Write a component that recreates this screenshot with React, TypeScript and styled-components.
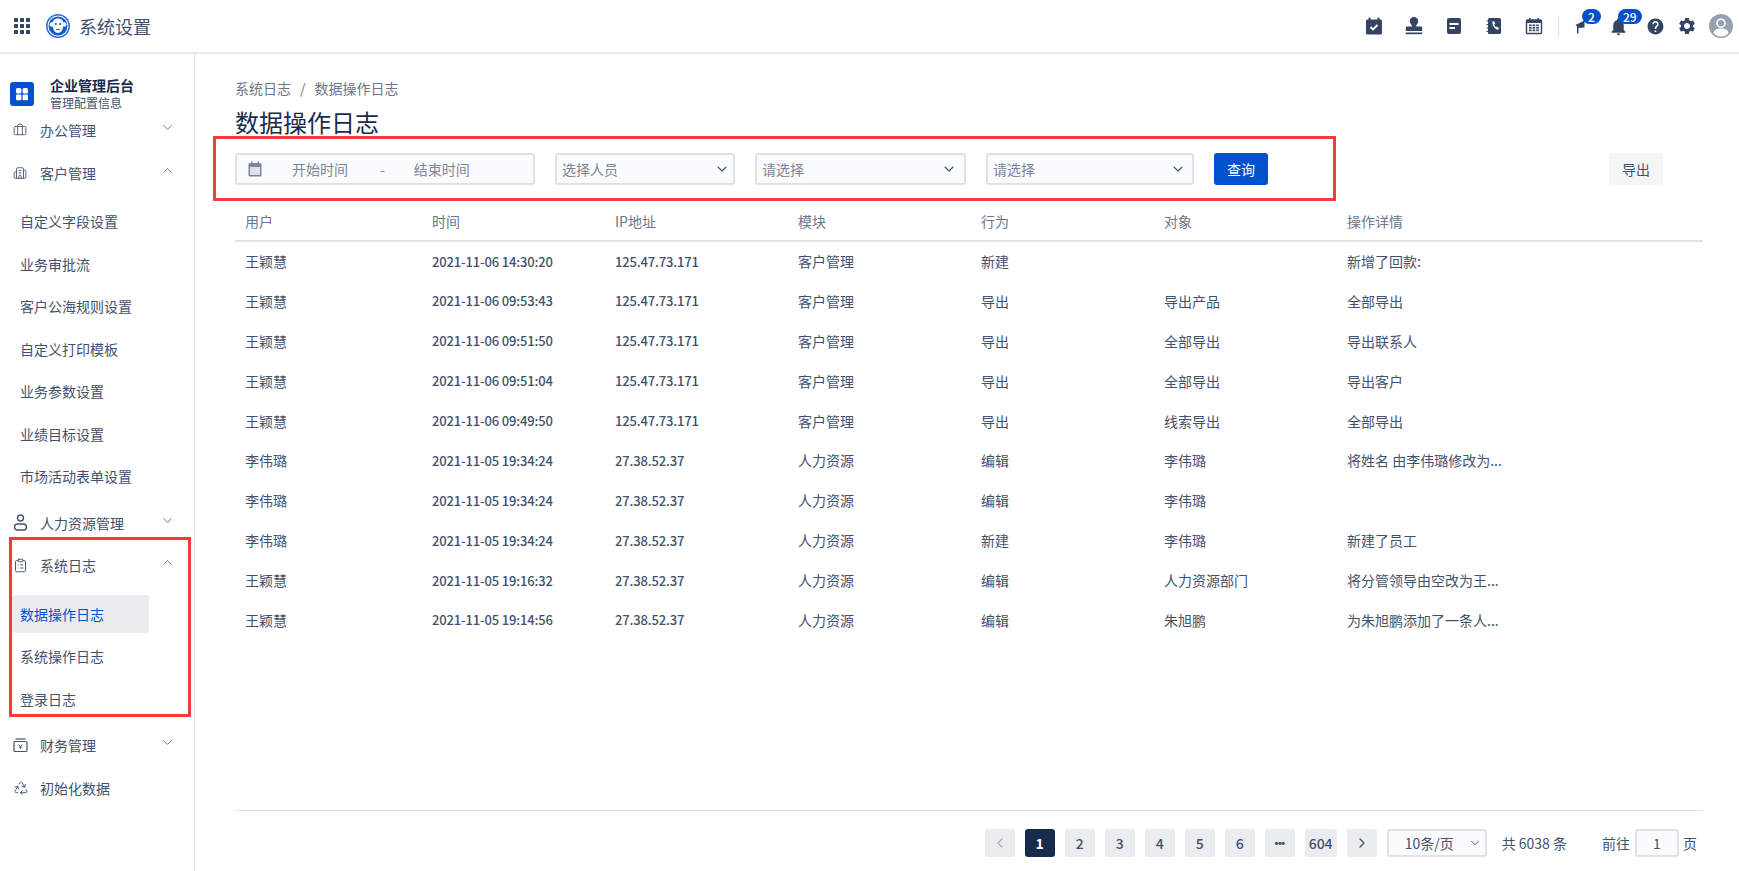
import React from "react";
import styled, { createGlobalStyle } from "styled-components";
import { Briefcase, Building2, ChevronDown, ChevronLeft, ChevronRight, ChevronUp, ClipboardList, Recycle } from "lucide-react";
import { MdHelp, MdNotifications, MdSettings } from "react-icons/md";

const NAVY = "#344563";
const TEXT = "#42526e";

const rows = [
  ["王颖慧", "2021-11-06 14:30:20", "125.47.73.171", "客户管理", "新建", "", "新增了回款:"],
  ["王颖慧", "2021-11-06 09:53:43", "125.47.73.171", "客户管理", "导出", "导出产品", "全部导出"],
  ["王颖慧", "2021-11-06 09:51:50", "125.47.73.171", "客户管理", "导出", "全部导出", "导出联系人"],
  ["王颖慧", "2021-11-06 09:51:04", "125.47.73.171", "客户管理", "导出", "全部导出", "导出客户"],
  ["王颖慧", "2021-11-06 09:49:50", "125.47.73.171", "客户管理", "导出", "线索导出", "全部导出"],
  ["李伟璐", "2021-11-05 19:34:24", "27.38.52.37", "人力资源", "编辑", "李伟璐", "将姓名 由李伟璐修改为..."],
  ["李伟璐", "2021-11-05 19:34:24", "27.38.52.37", "人力资源", "编辑", "李伟璐", ""],
  ["李伟璐", "2021-11-05 19:34:24", "27.38.52.37", "人力资源", "新建", "李伟璐", "新建了员工"],
  ["王颖慧", "2021-11-05 19:16:32", "27.38.52.37", "人力资源", "编辑", "人力资源部门", "将分管领导由空改为王..."],
  ["王颖慧", "2021-11-05 19:14:56", "27.38.52.37", "人力资源", "编辑", "朱旭鹏", "为朱旭鹏添加了一条人..."],
];

const GlobalStyle = createGlobalStyle`
  html, body {
    margin: 0;
    padding: 0;
    background: #fff;
    font-family: "Noto Sans CJK SC", "Noto Sans", sans-serif;
    color: ${TEXT};
  }
  * {
    box-sizing: border-box;
  }
`;

const Page = styled.div`
  display: flex;
  flex-direction: column;
  height: 100vh;
  overflow: hidden;
`;

const Header = styled.header`
  display: flex;
  align-items: center;
  flex: 0 0 54px;
  padding-left: 14px;
  border-bottom: 2px solid #e6e8ec;
`;

const AppName = styled.div`
  margin-left: 9px;
  font-size: 18px;
  line-height: 24px;
  color: ${TEXT};
`;

const Logo = styled.svg`
  width: 24px;
  height: 24px;
  margin-left: 16px;
`;

const HeaderIcons = styled.div`
  display: flex;
  align-items: center;
  margin-left: auto;
  height: 52px;
`;

const IconSlot = styled.div<{ $w: number }>`
  position: relative;
  display: flex;
  align-items: center;
  justify-content: center;
  width: ${p => p.$w}px;
  height: 100%;
  color: ${NAVY};
`;

const Divider = styled.div`
  width: 1px;
  height: 20px;
  margin-left: 4px;
  background: #dfe1e6;
`;

const Badge = styled.span<{ $left: number }>`
  position: absolute;
  top: 9px;
  left: ${p => p.$left}px;
  min-width: 19px;
  height: 15px;
  padding: 0 5px;
  border-radius: 8px;
  background: #0052cc;
  color: #fff;
  font-size: 12px;
  font-weight: 500;
  line-height: 15px;
  text-align: center;
`;

const Body = styled.div`
  display: flex;
  flex: 1;
  min-height: 0;
`;

const Sidebar = styled.aside`
  flex: 0 0 195px;
  padding-top: 24px;
  border-right: 1px solid #dfe1e6;
`;

const Brand = styled.div`
  display: flex;
  height: 31px;
  padding-left: 10px;
`;

const BrandMark = styled.div`
  display: flex;
  align-items: center;
  justify-content: center;
  width: 24px;
  height: 24px;
  margin-top: 4px;
  border-radius: 3px;
  background: #0052cc;
`;

const BrandText = styled.div`
  margin-left: 16px;
`;

const BrandTitle = styled.div`
  font-size: 14px;
  font-weight: 700;
  line-height: 14px;
  color: #172b4d;
`;

const BrandSub = styled.div`
  margin-top: 4px;
  font-size: 12px;
  line-height: 14px;
  color: ${TEXT};
`;

const NavItem = styled.div`
  display: flex;
  align-items: center;
  height: 42.5px;
  padding-left: 13px;
  font-size: 14px;
  color: ${TEXT};
`;

const NavIcon = styled.span`
  display: flex;
  width: 27px;
  color: ${TEXT};
`;

const NavChevron = styled.span`
  display: flex;
  margin-left: auto;
  margin-right: 19px;
  margin-bottom: 5px;
  color: #6b778c;
`;

const SubList = styled.div`
  padding: 8px 0 2px;
`;

const SubItem = styled.div<{ $active?: boolean }>`
  display: flex;
  align-items: center;
  width: 137px;
  height: 38px;
  margin: 0 0 4.5px 12px;
  padding-left: 8px;
  border-radius: 3px;
  background: ${p => (p.$active ? "#ebecf0" : "transparent")};
  color: ${p => (p.$active ? "#0052cc" : TEXT)};
  font-size: 14px;
`;

const SideGroup = styled.div`
  position: relative;
`;

const Annotation = styled.div<{ $top: number; $right: number; $bottom: number; $left: number }>`
  position: absolute;
  top: ${p => p.$top}px;
  right: ${p => p.$right}px;
  bottom: ${p => p.$bottom}px;
  left: ${p => p.$left}px;
  border: 3px solid #f73b3b;
  pointer-events: none;
`;

const Main = styled.main`
  display: flex;
  flex: 1;
  flex-direction: column;
  min-width: 0;
  padding: 25px 36px 14px 40px;
`;

const Crumbs = styled.div`
  display: flex;
  gap: 9px;
  font-size: 14px;
  line-height: 18px;
  color: #6b778c;
`;

const PageTitle = styled.h1`
  margin: 9px 0 15px;
  font-size: 24px;
  font-weight: 400;
  line-height: 32px;
  color: #172b4d;
`;

const Toolbar = styled.div`
  display: flex;
  justify-content: space-between;
  padding-right: 40px;
`;

const Filters = styled.div`
  position: relative;
  display: flex;
  align-items: stretch;
  gap: 20px;
  height: 32px;
`;

const Field = styled.div<{ $w: number }>`
  display: flex;
  align-items: center;
  width: ${p => p.$w}px;
  padding: 0 6px 0 5px;
  border: 2px solid #dfe1e6;
  border-radius: 3px;
  background: #fafbfc;
  font-size: 14px;
  color: #7a869a;
`;

const DateIcon = styled.svg`
  width: 14px;
  height: 16px;
  margin-left: 6px;
`;

const DateText = styled.span<{ $left: number }>`
  margin-left: ${p => p.$left}px;
`;

const FieldChevron = styled.span<{ $right: number }>`
  display: flex;
  margin-left: auto;
  margin-right: ${p => p.$right}px;
  color: ${TEXT};
`;

const Button = styled.button<{ $primary?: boolean }>`
  width: 54px;
  padding: 0;
  border: 0;
  border-radius: 3px;
  background: ${p => (p.$primary ? "#0052cc" : "#f4f5f7")};
  color: ${p => (p.$primary ? "#fff" : TEXT)};
  font: inherit;
  font-size: 14px;
`;

const Table = styled.table`
  width: 100%;
  margin-top: 18px;
  border-collapse: collapse;
  table-layout: fixed;
`;

const Th = styled.th`
  height: 38px;
  padding: 0 10px 2px;
  border-bottom: 2px solid #dfe1e6;
  color: #6b778c;
  font-size: 14px;
  font-weight: 400;
  text-align: left;
`;

const Td = styled.td<{ $num?: boolean }>`
  height: 39.9px;
  padding: 0 10px;
  color: ${TEXT};
  font-size: ${p => (p.$num ? "13px" : "14px")};
  font-weight: ${p => (p.$num ? 500 : 400)};
  letter-spacing: ${p => (p.$num ? "-0.15px" : "0")};
  white-space: nowrap;
`;

const Footer = styled.footer`
  display: flex;
  align-items: center;
  justify-content: flex-end;
  margin-top: auto;
  padding: 18px 6px 0 0;
  border-top: 1px solid #dfe1e6;
  font-size: 14px;
  color: ${TEXT};
`;

const PageBtn = styled.div<{ $active?: boolean; $muted?: boolean; $wide?: boolean }>`
  display: flex;
  align-items: center;
  justify-content: center;
  width: ${p => (p.$wide ? 32 : 30)}px;
  height: 28px;
  margin-right: 10px;
  border-radius: 3px;
  background: ${p => (p.$active ? "#172b4d" : "#ebecf0")};
  color: ${p => (p.$active ? "#fff" : p.$muted ? "#a5adba" : TEXT)};
  font-size: 14px;
  font-weight: ${p => (p.$active ? 700 : 500)};
`;

const Dots = styled.span`
  font-family: "Liberation Sans", sans-serif;
  font-size: 11px;
  font-weight: 700;
  letter-spacing: -0.5px;
`;

const PageSize = styled.div`
  display: flex;
  align-items: center;
  width: 100px;
  height: 28px;
  padding: 0 4px 0 16px;
  border: 2px solid #dfe1e6;
  border-radius: 3px;
  background: #fafbfc;
`;

const Total = styled.span`
  margin-left: 15px;
`;

const Jump = styled.span`
  margin-left: 35px;
`;

const JumpInput = styled.div`
  display: flex;
  align-items: center;
  justify-content: center;
  width: 44px;
  height: 28px;
  margin: 0 4px 0 5px;
  border: 2px solid #dfe1e6;
  border-radius: 3px;
  background: #fafbfc;
`;

function GridIcon() {
  const cells = [0, 6, 12];
  return (
    <svg width="16" height="16" viewBox="0 0 16 16">
      {cells.map(y => cells.map(x => <rect key={`${x}-${y}`} x={x} y={y} width="4" height="4" rx="0.5" fill={NAVY} />))}
    </svg>
  );
}

function Monkey() {
  return (
    <Logo viewBox="0 0 24 24">
      <circle cx="12" cy="12" r="12" fill="#2a6fdb" />
      <circle cx="12" cy="12" r="10.5" fill="#fff" />
      <circle cx="12" cy="12" r="9.5" fill="#0b5bd3" />
      <circle cx="5.800" cy="10.500" r="2.300" fill="#fff" />
      <circle cx="18.200" cy="10.500" r="2.300" fill="#fff" />
      <path d="M12 4.500c3.500 0 5.500 2.200 5.500 5 0 1.200-.4 2-.4 3 0 3-2.200 6.500-5.100 6.500s-5.100-3.500-5.100-6.500c0-1-.4-1.800-.4-3 0-2.800 2-5 5.500-5z" fill="#fff" />
      <circle cx="9.800" cy="10" r="1.100" fill="#0b5bd3" />
      <circle cx="14.200" cy="10" r="1.100" fill="#0b5bd3" />
      <path d="M10.500 15.500h3" stroke="#0b5bd3" strokeWidth="1" strokeLinecap="round" />
    </Logo>
  );
}

function TaskIcon() {
  return (
    <svg width="18" height="18" viewBox="0 0 18 18">
      <rect x="1" y="2.500" width="16" height="15" rx="1.500" fill={NAVY} />
      <rect x="3.500" y="0.500" width="2" height="4" rx="0.500" fill={NAVY} />
      <rect x="12.500" y="0.500" width="2" height="4" rx="0.500" fill={NAVY} />
      <path d="M5.500 10l2.500 2.500 4.500-4.500" fill="none" stroke="#fff" strokeWidth="1.800" />
    </svg>
  );
}

function StampIcon() {
  return (
    <svg width="18" height="18" viewBox="0 0 18 18">
      <circle cx="9" cy="4.200" r="4.200" fill={NAVY} />
      <path d="M6.800 7h4.400v2.500h5a1 1 0 0 1 1 1v3.500h-16.400v-3.500a1 1 0 0 1 1-1h5z" fill={NAVY} />
      <rect x="0.800" y="15.500" width="16.400" height="1.700" fill={NAVY} />
    </svg>
  );
}

function NoteIcon() {
  return (
    <svg width="18" height="18" viewBox="0 0 18 18">
      <rect x="2" y="1" width="14" height="16" rx="2" fill={NAVY} />
      <rect x="4.500" y="6" width="9" height="2" fill="#fff" />
      <rect x="4.500" y="10" width="5.500" height="2" fill="#fff" />
    </svg>
  );
}

function ContactIcon() {
  return (
    <svg width="18" height="18" viewBox="0 0 18 18">
      <rect x="3" y="1" width="13" height="16" rx="1.500" fill={NAVY} />
      <path d="M1.500 4h2M1.500 7.500h2M1.500 11h2M1.500 14.500h2" stroke={NAVY} strokeWidth="1.200" />
      <path d="M7.500 4.500l1.500-.5 1.200 2.500-1 .8c.3 1.200 1 2.200 2 2.900l1-.7 1.800 2-1 1.300c-3-.5-6.300-4.800-5.500-8.300z" fill="#fff" />
    </svg>
  );
}

function CalendarGridIcon() {
  return (
    <svg width="18" height="18" viewBox="0 0 18 18">
      <rect x="1.500" y="3" width="15" height="13.500" rx="1" fill="#fff" stroke={NAVY} strokeWidth="1.400" />
      <rect x="1.500" y="3" width="15" height="3" fill={NAVY} />
      <rect x="4" y="1" width="1.600" height="3.500" fill={NAVY} />
      <rect x="12.400" y="1" width="1.600" height="3.500" fill={NAVY} />
      {[4, 7.6, 11.2].map(x =>
        [7.5, 10, 12.5].map(y => <rect key={`${x}-${y}`} x={x} y={y} width="2.600" height="1.700" fill={NAVY} />),
      )}
    </svg>
  );
}

function FlagIcon() {
  return (
    <svg width="18" height="18" viewBox="0 0 18 18">
      <path d="M6.500 8l9-4.500v7l-6 .5z" fill={NAVY} />
      <rect x="8" y="10" width="1.500" height="6.500" fill={NAVY} />
    </svg>
  );
}

function AvatarIcon() {
  return (
    <svg width="24" height="24" viewBox="0 0 24 24">
      <circle cx="12" cy="12" r="12" fill="#97a0af" />
      <circle cx="12" cy="9.200" r="4.800" fill="#fff" />
      <circle cx="12" cy="9.200" r="3.200" fill="#97a0af" />
      <path d="M4.500 19.500c0-3.500 3-5 7.500-5s7.500 1.500 7.500 5a11 11 0 0 1-15 0z" fill="#fff" />
    </svg>
  );
}

function BrandGlyph() {
  return (
    <svg width="14" height="14" viewBox="0 0 14 14">
      <rect x="1" y="1" width="5.400" height="5.600" rx="1.500" fill="#fff" />
      <rect x="7.600" y="1" width="5.400" height="5.600" rx="1.500" fill="#fff" />
      <rect x="1" y="7.600" width="5.400" height="5.600" rx="1" fill="#fff" />
      <rect x="7.600" y="7.600" width="5.400" height="5.600" rx="1" fill="#fff" />
    </svg>
  );
}

function PersonIcon() {
  return (
    <svg width="15" height="17" viewBox="0 0 15 17" fill="none" stroke="currentColor" strokeWidth="1.400">
      <circle cx="7.500" cy="4" r="3" />
      <rect x="1.500" y="10" width="12" height="6" rx="3" />
    </svg>
  );
}

function FinanceIcon() {
  return (
    <svg width="15" height="15" viewBox="0 0 15 15" fill="none" stroke="currentColor">
      <rect x="1" y="3.500" width="13" height="10" rx="1.200" strokeWidth="1.200" />
      <path d="M2.500 1h10" strokeWidth="1.200" />
      <path d="M5.500 6.500l2 2 2-2M7.500 8.500v2.500M5.800 9h3.400" strokeWidth="0.900" />
    </svg>
  );
}

function Nav({ icon, label, open }: { icon: React.ReactNode; label: string; open?: boolean }) {
  return (
    <NavItem>
      <NavIcon>{icon}</NavIcon>
      {label}
      {open !== undefined && (
        <NavChevron>{open ? <ChevronUp size={15} strokeWidth={1.6} /> : <ChevronDown size={15} strokeWidth={1.6} />}</NavChevron>
      )}
    </NavItem>
  );
}

export default function App() {
  return (
    <Page>
      <GlobalStyle />
      <Header>
        <GridIcon />
        <Monkey />
        <AppName>系统设置</AppName>
        <HeaderIcons>
          <IconSlot $w={40}><TaskIcon /></IconSlot>
          <IconSlot $w={40}><StampIcon /></IconSlot>
          <IconSlot $w={40}><NoteIcon /></IconSlot>
          <IconSlot $w={40}><ContactIcon /></IconSlot>
          <IconSlot $w={40}><CalendarGridIcon /></IconSlot>
          <Divider />
          <IconSlot $w={38}>
            <FlagIcon />
            <Badge $left={23}>2</Badge>
          </IconSlot>
          <IconSlot $w={42}>
            <MdNotifications size={21} />
            <Badge $left={21}>29</Badge>
          </IconSlot>
          <IconSlot $w={32}><MdHelp size={19} /></IconSlot>
          <IconSlot $w={32}><MdSettings size={20} /></IconSlot>
          <IconSlot $w={36}><AvatarIcon /></IconSlot>
        </HeaderIcons>
      </Header>
      <Body>
        <Sidebar>
          <Brand>
            <BrandMark><BrandGlyph /></BrandMark>
            <BrandText>
              <BrandTitle>企业管理后台</BrandTitle>
              <BrandSub>管理配置信息</BrandSub>
            </BrandText>
          </Brand>
          <Nav icon={<Briefcase size={14} strokeWidth={1.5} />} label="办公管理" open={false} />
          <Nav icon={<Building2 size={14} strokeWidth={1.5} />} label="客户管理" open />
          <SubList>
            <SubItem>自定义字段设置</SubItem>
            <SubItem>业务审批流</SubItem>
            <SubItem>客户公海规则设置</SubItem>
            <SubItem>自定义打印模板</SubItem>
            <SubItem>业务参数设置</SubItem>
            <SubItem>业绩目标设置</SubItem>
            <SubItem>市场活动表单设置</SubItem>
          </SubList>
          <Nav icon={<PersonIcon />} label="人力资源管理" open={false} />
          <SideGroup>
            <Annotation $top={-7} $right={3} $bottom={7} $left={9} />
            <Nav icon={<ClipboardList size={15} strokeWidth={1.5} />} label="系统日志" open />
            <SubList>
              <SubItem $active>数据操作日志</SubItem>
              <SubItem>系统操作日志</SubItem>
              <SubItem>登录日志</SubItem>
            </SubList>
          </SideGroup>
          <Nav icon={<FinanceIcon />} label="财务管理" open={false} />
          <Nav icon={<Recycle size={16} strokeWidth={1.4} />} label="初始化数据" />
        </Sidebar>
        <Main>
          <Crumbs>
            <span>系统日志</span>
            <span>/</span>
            <span>数据操作日志</span>
          </Crumbs>
          <PageTitle>数据操作日志</PageTitle>
          <Toolbar>
            <Filters>
              <Annotation $top={-17} $right={-68} $bottom={-16} $left={-22} />
              <Field $w={300}>
                <DateIcon viewBox="0 0 14 16">
                  <rect x="0.500" y="2" width="13" height="13.500" rx="1.500" fill="#7a869a" />
                  <rect x="3" y="0.500" width="1.500" height="3" fill="#7a869a" />
                  <rect x="9.500" y="0.500" width="1.500" height="3" fill="#7a869a" />
                  <rect x="2" y="6" width="10" height="8" fill="#dfe1e6" />
                </DateIcon>
                <DateText $left={30}>开始时间</DateText>
                <DateText $left={32}>-</DateText>
                <DateText $left={29}>结束时间</DateText>
              </Field>
              <Field $w={180}>
                选择人员
                <FieldChevron $right={-3}><ChevronDown size={16} strokeWidth={1.6} /></FieldChevron>
              </Field>
              <Field $w={211}>
                请选择
                <FieldChevron $right={1}><ChevronDown size={16} strokeWidth={1.6} /></FieldChevron>
              </Field>
              <Field $w={208}>
                请选择
                <FieldChevron $right={0}><ChevronDown size={16} strokeWidth={1.6} /></FieldChevron>
              </Field>
              <Button $primary>查询</Button>
            </Filters>
            <Button>导出</Button>
          </Toolbar>
          <Table>
            <colgroup>
              <col width="187" />
              <col width="183" />
              <col width="183" />
              <col width="183" />
              <col width="183" />
              <col width="183" />
              <col width="183" />
              <col width="183" />
            </colgroup>
            <thead>
              <tr>
                {["用户", "时间", "IP地址", "模块", "行为", "对象", "操作详情", ""].map((h, i) => <Th key={i}>{h}</Th>)}
              </tr>
            </thead>
            <tbody>
              {rows.map((r, i) => (
                <tr key={i}>
                  {r.map((c, j) => <Td key={j} $num={j === 1 || j === 2}>{c}</Td>)}
                  <Td />
                </tr>
              ))}
            </tbody>
          </Table>
          <Footer>
            <PageBtn $muted><ChevronLeft size={16} /></PageBtn>
            <PageBtn $active>1</PageBtn>
            <PageBtn>2</PageBtn>
            <PageBtn>3</PageBtn>
            <PageBtn>4</PageBtn>
            <PageBtn>5</PageBtn>
            <PageBtn>6</PageBtn>
            <PageBtn><Dots>•••</Dots></PageBtn>
            <PageBtn $wide>604</PageBtn>
            <PageBtn><ChevronRight size={16} /></PageBtn>
            <PageSize>
              10条/页
              <FieldChevron $right={-1}><ChevronDown size={14} strokeWidth={1.6} /></FieldChevron>
            </PageSize>
            <Total>共 6038 条</Total>
            <Jump>前往</Jump>
            <JumpInput>1</JumpInput>
            <span>页</span>
          </Footer>
        </Main>
      </Body>
    </Page>
  );
}
